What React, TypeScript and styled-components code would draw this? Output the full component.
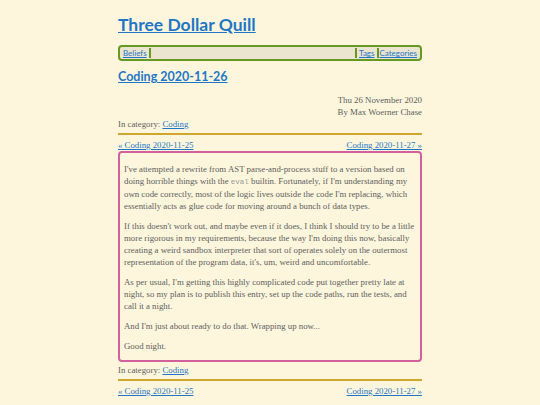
import styled, { createGlobalStyle } from "styled-components";

const GlobalStyle = createGlobalStyle`
  html, body {
    margin: 0;
    padding: 0;
    background: #fdf6dc;
  }
  body {
    font-family: "Liberation Serif", "DejaVu Serif", serif;
    color: #5e5e5e;
  }
  a {
    color: #1f76c6;
  }
`;

const Page = styled.div`
  width: 304px;
  margin: 0 auto;
  padding-top: 14px;
  font-size: 8.8px;
  line-height: 12px;
`;

const SiteTitle = styled.h1`
  margin: 0 0 9px;
  font-family: "Lato", "Noto Sans", sans-serif;
  font-size: 17.5px;
  line-height: 22px;
  font-weight: 700;
`;

const Nav = styled.nav`
  display: flex;
  align-items: center;
  height: 12px;
  padding: 0 2px;
  border: 2px solid #669922;
  border-radius: 4px;
  background: #ebe5cf;
  font-family: "Lato", "Noto Sans", sans-serif;
  font-size: 8px;
`;

const NavLink = styled.a<{ $right?: boolean; $left?: boolean }>`
  line-height: 10px;
  border-left: ${(p) => (p.$left ? "2px solid #669922" : "none")};
  border-right: ${(p) => (p.$right ? "2px solid #669922" : "none")};
  padding-left: ${(p) => (p.$left ? "2px" : "1px")};
  padding-right: ${(p) => (p.$right ? "2px" : "1px")};
`;

const Spacer = styled.div`
  flex: 1;
`;

const PostTitle = styled.h2`
  margin: 8px 0 9px;
  font-family: "Lato", "Noto Sans", sans-serif;
  font-size: 12.5px;
  line-height: 16px;
  font-weight: 700;
`;

const Meta = styled.div`
  text-align: right;
  line-height: 12px;
`;

const Category = styled.div`
  line-height: 12px;
`;

const Rule = styled.hr`
  margin: 3px 0 4px;
  border: none;
  height: 2px;
  background: #cfa72c;
`;

const PrevNext = styled.div`
  display: flex;
  justify-content: space-between;
  line-height: 12px;
`;

const Article = styled.article`
  margin: 0 0 2px;
  padding: 2px 4px 0;
  border: 2px solid #d3609c;
  border-radius: 4px;
  line-height: 12px;
  p {
    margin: 8px 0;
  }
`;

const Code = styled.code`
  font-family: "Liberation Mono", "DejaVu Sans Mono", monospace;
  font-size: 7.5px;
  color: #999;
`;

export default function App() {
  return (
    <>
      <GlobalStyle />
      <Page>
        <SiteTitle>
          <a href="#">Three Dollar Quill</a>
        </SiteTitle>
        <Nav>
          <NavLink href="#" $right>
            Beliefs
          </NavLink>
          <Spacer />
          <NavLink href="#" $left $right>
            Tags
          </NavLink>
          <NavLink href="#">Categories</NavLink>
        </Nav>
        <PostTitle>
          <a href="#">Coding 2020-11-26</a>
        </PostTitle>
        <Meta>
          Thu 26 November 2020
          <br />
          By Max Woerner Chase
        </Meta>
        <Category>
          In category: <a href="#">Coding</a>
        </Category>
        <Rule />
        <PrevNext>
          <a href="#">« Coding 2020-11-25</a>
          <a href="#">Coding 2020-11-27 »</a>
        </PrevNext>
        <Article>
          <p>
            I've attempted a rewrite from AST parse-and-process stuff to a version based on
            doing horrible things with the <Code>eval</Code> builtin. Fortunately, if I'm
            understanding my own code correctly, most of the logic lives outside the code I'm
            replacing, which essentially acts as glue code for moving around a bunch of data
            types.
          </p>
          <p>
            If this doesn't work out, and maybe even if it does, I think I should try to be a
            little more rigorous in my requirements, because the way I'm doing this now,
            basically creating a weird sandbox interpreter that sort of operates solely on the
            outermost representation of the program data, it's, um, weird and uncomfortable.
          </p>
          <p>
            As per usual, I'm getting this highly complicated code put together pretty late at
            night, so my plan is to publish this entry, set up the code paths, run the tests,
            and call it a night.
          </p>
          <p>And I'm just about ready to do that. Wrapping up now...</p>
          <p>Good night.</p>
        </Article>
        <Category>
          In category: <a href="#">Coding</a>
        </Category>
        <Rule />
        <PrevNext>
          <a href="#">« Coding 2020-11-25</a>
          <a href="#">Coding 2020-11-27 »</a>
        </PrevNext>
      </Page>
    </>
  );
}
